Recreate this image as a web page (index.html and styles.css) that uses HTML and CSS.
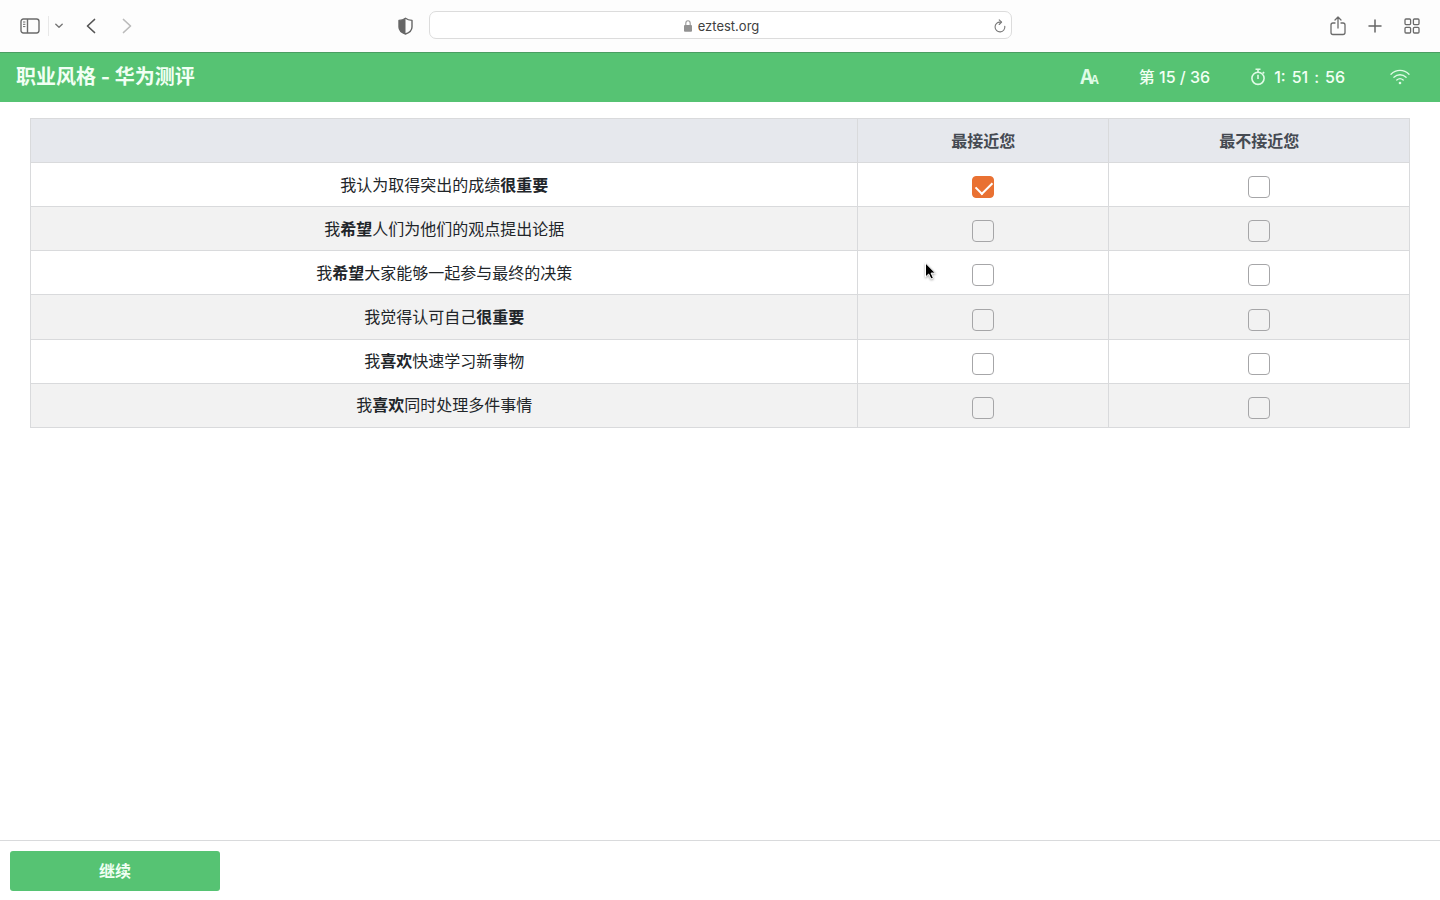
FILE: index.html
```html
<!DOCTYPE html>
<html lang="zh-CN">
<head>
<meta charset="utf-8">
<meta name="viewport" content="width=device-width, initial-scale=1">
<title>职业风格 - 华为测评</title>
<link rel="stylesheet" href="styles.css">
</head>
<body>
<div class="browser-bar">
  <div class="bar-left">
    <button class="tool" aria-label="Sidebar"><svg width="20" height="16" viewBox="0 0 20 16" fill="none" stroke="#6b6b6b" stroke-width="1.4"><rect x="1" y="1" width="18" height="14" rx="2.4"/><path d="M7.5 1v14"/><path d="M3 4h2.4M3 6.3h2.4M3 8.6h2.4" stroke-width="1"/></svg></button>
    <span class="divider"></span>
    <button class="tool" aria-label="Tab groups"><svg width="8" height="6" viewBox="0 0 8 6" fill="none" stroke="#777" stroke-width="1.4" stroke-linecap="round" stroke-linejoin="round"><path d="M.8 1.2 4 4.2l3.200-3"/></svg></button>
    <button class="tool tool-back" aria-label="Back"><svg width="10" height="16" viewBox="0 0 10 16" fill="none" stroke="#555" stroke-width="1.700" stroke-linecap="round" stroke-linejoin="round"><path d="M8.500 1.500 1.500 8l7 6.500"/></svg></button>
    <button class="tool tool-forward" aria-label="Forward"><svg width="10" height="16" viewBox="0 0 10 16" fill="none" stroke="#bbb" stroke-width="1.700" stroke-linecap="round" stroke-linejoin="round"><path d="m1.500 1.500 7 6.500-7 6.500"/></svg></button>
    <button class="tool tool-shield" aria-label="Privacy report"><svg width="15" height="18" viewBox="0 0 15 18"><path d="M7.500 1.200C9.300 2.600 11.500 3.200 14 3.400V10c0 3.500-2.800 5.700-6.500 7C3.800 15.700 1 13.500 1 10V3.400c2.500-.2 4.700-.8 6.500-2.200Z" fill="none" stroke="#666" stroke-width="1.400" stroke-linejoin="round"/><path d="M7.500 1.200V17C3.800 15.700 1 13.500 1 10V3.400c2.500-.2 4.700-.8 6.500-2.200Z" fill="#666"/></svg></button>
  </div>
  <div class="address">
    <span class="site"><svg width="8" height="12" viewBox="0 0 8 12"><path d="M1.800 6V3.400a2.200 2.600 0 0 1 4.400 0V6" fill="none" stroke="#999" stroke-width="1.100"/><rect y="5" width="8" height="6.800" rx="1" fill="#929292"/></svg><span>eztest.org</span></span>
    <button class="tool" aria-label="Reload"><svg width="12" height="14" viewBox="0 0 12 14" fill="none" stroke="#777" stroke-width="1.100" stroke-linecap="round" stroke-linejoin="round"><path d="M10.800 7.200A4.900 4.900 0 1 1 6.300 3.100h.9"/><path d="m5.200.8 2.400 2.300-2.400 2.400"/></svg></button>
  </div>
  <div class="bar-right">
    <button class="tool" aria-label="Share"><svg width="16" height="20" viewBox="0 0 16 20" fill="none" stroke="#6b6b6b" stroke-width="1.300" stroke-linecap="round" stroke-linejoin="round"><path d="M5 7H3a2 2 0 0 0-2 2v7.500a2 2 0 0 0 2 2h10a2 2 0 0 0 2-2V9a2 2 0 0 0-2-2h-2M8 12V1M5 4l3-3 3 3"/></svg></button>
    <button class="tool" aria-label="New tab"><svg width="14" height="14" viewBox="0 0 14 14" fill="none" stroke="#666" stroke-width="1.500" stroke-linecap="round"><path d="M7 1v12M1 7h12"/></svg></button>
    <button class="tool" aria-label="Tab overview"><svg width="16" height="16" viewBox="0 0 16 16" fill="none" stroke="#6b6b6b" stroke-width="1.300"><rect x="1" y="1" width="5.600" height="5.600" rx="1"/><rect x="9.400" y="1" width="5.600" height="5.600" rx="1"/><rect x="1" y="9.400" width="5.600" height="5.600" rx="1"/><rect x="9.400" y="9.400" width="5.600" height="5.600" rx="1"/></svg></button>
  </div>
</div>

<header class="exam-header">
  <h1>职业风格 - 华为测评</h1>
  <div class="status">
    <button class="tool text-size" aria-label="字体大小"><span>A</span><span class="small">A</span></button>
    <span>第 15 / 36</span>
    <span class="timer"><svg width="16" height="18" viewBox="0 0 16 18" fill="none" stroke="#dffbe6" stroke-width="1.600"><circle cx="8" cy="10.300" r="6.100"/><path d="M5.500 1.200h5M8 1.200v3M8 6.800v4.200M12.800 4l1.400 1.400"/></svg><span class="time"><span>1:</span><span>51</span><span>:</span><span>56</span></span></span>
    <svg class="wifi" width="20" height="16" viewBox="0 0 20 16" fill="none" stroke="#dffbe6" stroke-width="1.300" stroke-linecap="round"><path d="M1 5.200c5-5 13-5 18 0M3.900 8.200c3.500-3.300 8.700-3.300 12.200 0M6.800 11c1.900-1.700 4.500-1.700 6.400 0"/><circle cx="10" cy="14" r="1.300" fill="#dffbe6" stroke="none"/></svg>
  </div>
</header>

<main class="question">
  <table class="choices">
    <thead><tr><td class="statement"></td><th class="most" scope="col" id="most">最接近您</th><th scope="col" id="least">最不接近您</th></tr></thead>
    <tbody>
      <tr><td id="s1">我认为取得突出的成绩<b>很重要</b></td><td><input type="checkbox" checked aria-labelledby="s1 most"></td><td><input type="checkbox" aria-labelledby="s1 least"></td></tr>
      <tr><td id="s2">我<b>希望</b>人们为他们的观点提出论据</td><td><input type="checkbox" aria-labelledby="s2 most"></td><td><input type="checkbox" aria-labelledby="s2 least"></td></tr>
      <tr><td id="s3">我<b>希望</b>大家能够一起参与最终的决策</td><td class="pointed"><input type="checkbox" aria-labelledby="s3 most"><svg class="pointer" width="13" height="19" viewBox="0 0 13 19"><path d="M1.500 1v14l3.200-3 2.300 5 2.400-1.100-2.300-4.800h4.300Z" fill="#000" stroke="#fff" stroke-width="1"/></svg></td><td><input type="checkbox" aria-labelledby="s3 least"></td></tr>
      <tr><td id="s4">我觉得认可自己<b>很重要</b></td><td><input type="checkbox" aria-labelledby="s4 most"></td><td><input type="checkbox" aria-labelledby="s4 least"></td></tr>
      <tr><td id="s5">我<b>喜欢</b>快速学习新事物</td><td><input type="checkbox" aria-labelledby="s5 most"></td><td><input type="checkbox" aria-labelledby="s5 least"></td></tr>
      <tr><td id="s6">我<b>喜欢</b>同时处理多件事情</td><td><input type="checkbox" aria-labelledby="s6 most"></td><td><input type="checkbox" aria-labelledby="s6 least"></td></tr>
    </tbody>
  </table>
</main>

<footer class="actions"><button class="continue">继续</button></footer>
</body>
</html>
```
FILE: styles.css
```css
* {
  box-sizing: border-box;
}

body {
  margin: 0;
  min-height: 100vh;
  display: flex;
  flex-direction: column;
  background: #fff;
  color: #212529;
  font: 16px/24px Inter, "Noto Sans CJK SC", sans-serif;
}

button {
  font: inherit;
}

svg {
  display: block;
  flex: none;
}

.tool {
  display: block;
  padding: 0;
  border: 0;
  background: none;
}

/* Browser toolbar */
.browser-bar {
  display: grid;
  grid-template-columns: 1fr minmax(0, 583px) 1fr;
  align-items: center;
  gap: 16px;
  height: 52px;
  padding: 0 20px;
  background: #fdfdfd;
}

.bar-left,
.bar-right {
  display: flex;
  align-items: center;
}

.divider {
  width: 1px;
  height: 20px;
  margin: 0 6px 0 8px;
  background: #e8e8e8;
}

.tool-back {
  margin-left: 23px;
}

.tool-forward {
  margin-left: 26px;
}

.tool-shield {
  margin-left: auto;
}

.bar-right {
  justify-content: flex-end;
  gap: 22px;
}

.address {
  display: flex;
  align-items: center;
  height: 28px;
  margin-bottom: 2px;
  padding: 2px 5px 0 6px;
  border: 1px solid #dcdcdc;
  border-radius: 7px;
  background: #fff;
}

.site {
  flex: 1;
  display: flex;
  align-items: center;
  justify-content: center;
  gap: 6px;
  padding-left: 14px;
  color: #404040;
  font-size: 13px;
}

/* Exam header */
.exam-header {
  display: flex;
  align-items: center;
  justify-content: space-between;
  height: 50px;
  padding: 0 30px 2px 16px;
  border-top: 1px solid #4a9d62;
  background: #56c373;
  color: #f1fff4;
}

.exam-header h1 {
  margin: 0;
  font-size: 20px;
  line-height: 30px;
  font-weight: 700;
}

.status {
  display: flex;
  align-items: center;
  gap: 40px;
  font-weight: 500;
}

.text-size {
  display: flex;
  align-items: baseline;
  padding-top: 2px;
  color: #dffbe6;
  font: 700 20px/24px "Noto Sans CJK SC", sans-serif;
}

.text-size .small {
  margin-left: -2px;
  font-size: 12px;
}

.timer,
.time {
  display: flex;
  align-items: center;
}

.timer {
  gap: 8px;
}

.time {
  gap: 6px;
}

.wifi {
  margin-left: 5px;
}

/* Statement table */
.question {
  flex: 1;
  padding: 16px 30px;
}

.choices {
  width: 100%;
  height: 310px;
  border-collapse: collapse;
  table-layout: fixed;
  text-align: center;
}

.choices tr {
  height: 44px;
}

.choices th,
.choices td {
  padding: 0;
  border: 1px solid #d9dadc;
  vertical-align: middle;
}

.choices thead {
  background: #e6e8ed;
  color: #454a52;
}

.statement {
  width: 60%;
}

.most {
  width: 18.2%;
}

.choices tbody tr:nth-child(even) {
  background: #f2f2f2;
}

.choices input {
  appearance: none;
  display: block;
  width: 22px;
  height: 22px;
  margin: 5px auto 0;
  border: 1px solid #a6a6a8;
  border-radius: 4px;
}

.choices input:checked {
  border-color: #e97132;
  background: #e97132;
}

.choices input:checked::before {
  content: "";
  display: block;
  width: 14px;
  height: 8px;
  margin: 4px 0 0 3px;
  border: solid #fff;
  border-width: 0 0 2px 2px;
  transform: rotate(-45deg);
}

.pointed {
  position: relative;
}

.pointer {
  position: absolute;
  top: 11px;
  left: 66px;
  filter: drop-shadow(0 1px 1px rgb(0 0 0 / 35%));
}

/* Footer */
.actions {
  padding: 10px 10px 9px;
  border-top: 1px solid #d9dadc;
}

.continue {
  display: block;
  width: 210px;
  height: 40px;
  padding: 0;
  border: 0;
  border-radius: 3px;
  background: #56c373;
  color: #f1fff4;
  font-weight: 700;
}
```
